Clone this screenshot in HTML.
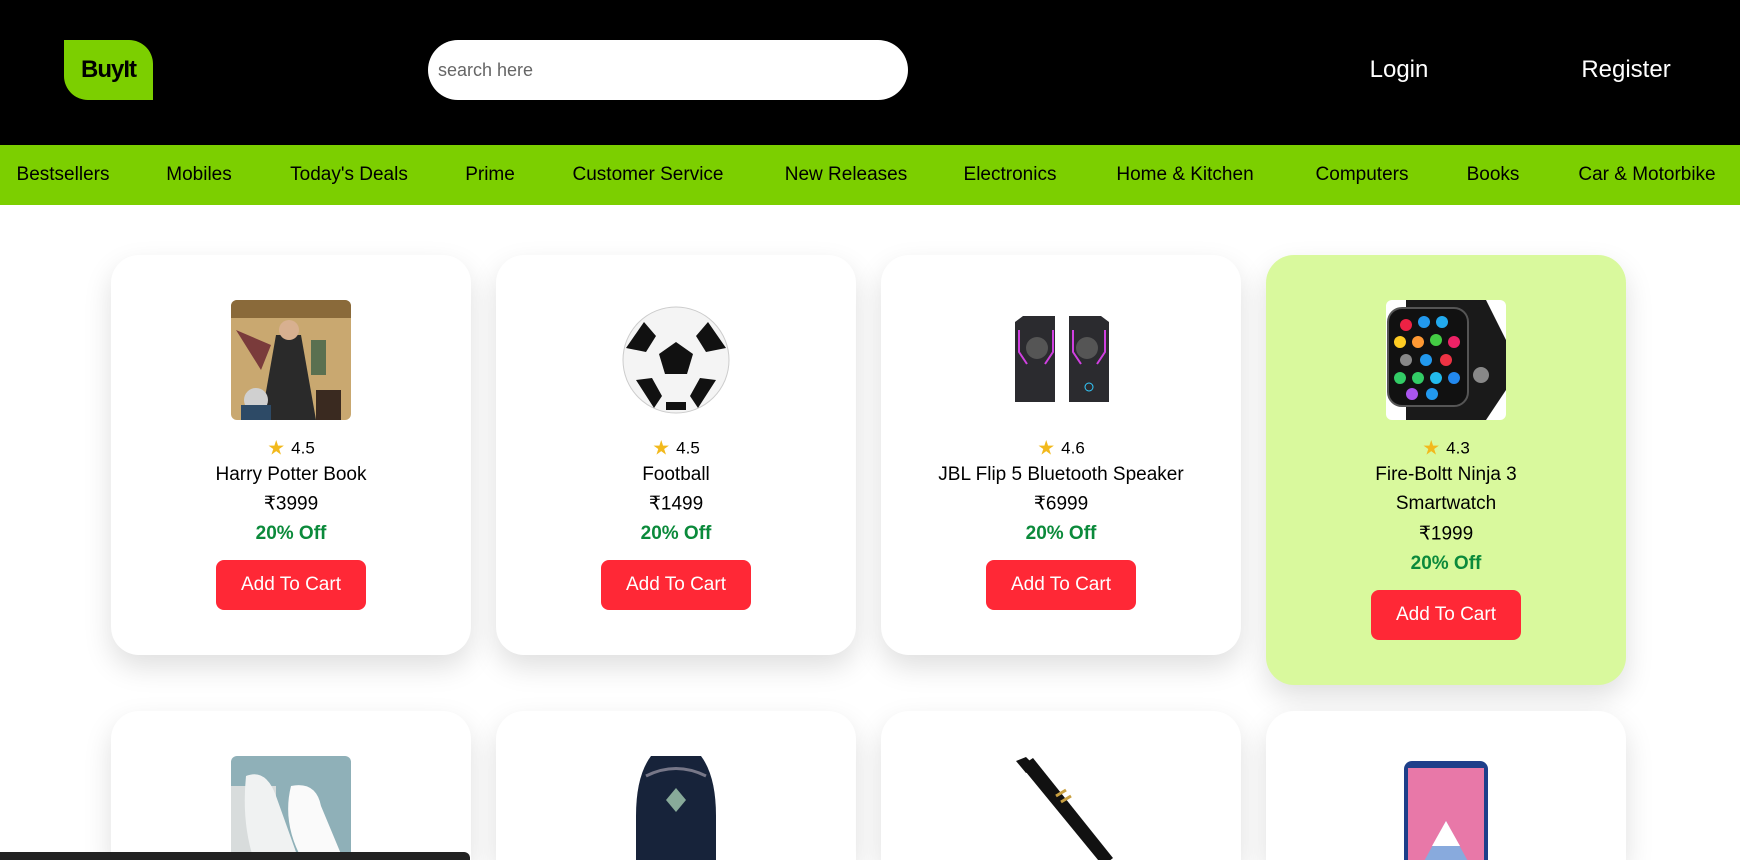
<!DOCTYPE html>
<html><head><meta charset="utf-8"><style>
*{margin:0;padding:0;box-sizing:border-box}
html,body{width:1740px;height:860px;overflow:hidden;background:#fff}
body{font-family:"Liberation Sans",sans-serif}
#w{position:relative;width:1740px;height:860px;overflow:hidden}
.hdr{position:absolute;left:0;top:0;width:1740px;height:145px;background:#000}
.logo{position:absolute;left:64px;top:40px;width:89px;height:60px;background:#7ccf00;border-radius:0 24px 0 24px;color:#000;font-weight:bold;font-size:24px;line-height:60px;text-align:center;letter-spacing:-1px}
.search{position:absolute;left:428px;top:40px;width:480px;height:60px;background:#fff;border-radius:30px;color:#666;font-size:18px;line-height:60px;padding-left:10px}
.hl{position:absolute;top:56px;color:#fff;font-size:24px;transform:translateX(-50%)}
.nav{position:absolute;left:0;top:145px;width:1740px;height:60px;background:#7ccf00}
.nav span{position:absolute;top:19px;font-size:19px;color:#000;transform:translateX(-50%);white-space:nowrap}
.card{position:absolute;width:360px;background:#fff;border-radius:28px;box-shadow:0 12px 28px rgba(0,0,0,.13);text-align:center}
.card.b{height:149px;border-radius:28px 28px 0 0;overflow:hidden;top:711px}
.card .im{position:absolute;left:120px;top:45px;width:120px;height:120px;border-radius:6px;overflow:hidden}
.card.b .im{height:104px;border-radius:6px 6px 0 0}
.t{position:absolute;left:0;width:360px;text-align:center;color:#000;transform:translateY(-50%);white-space:nowrap}
.r{font-size:17px}.n{font-size:19px}.p{font-size:19px}.o{font-size:19px;font-weight:bold;color:#0b8a3b}
.star{display:inline-block;color:#f2b91c;font-size:20px;margin-right:6px;vertical-align:-1px}
.btn{position:absolute;left:105px;width:150px;height:50px;background:#ff2836;color:#fff;border-radius:8px;font-size:19px;line-height:50px}
.bar{position:absolute;left:0;top:852px;width:470px;height:8px;background:#222;border-radius:0 6px 0 0}
</style></head><body><div id="w">
<div class="hdr">
<div class="logo">BuyIt</div>
<div class="search">search here</div>
<div class="hl" style="left:1399px">Login</div>
<div class="hl" style="left:1626px">Register</div>
</div>
<div class="nav">
<span style="left:63px">Bestsellers</span><span style="left:199px">Mobiles</span><span style="left:349px">Today's Deals</span><span style="left:490px">Prime</span><span style="left:648px">Customer Service</span><span style="left:846px">New Releases</span><span style="left:1010px">Electronics</span><span style="left:1185px">Home &amp; Kitchen</span><span style="left:1362px">Computers</span><span style="left:1493px">Books</span><span style="left:1647px">Car &amp; Motorbike</span>
</div>

<div class="card" style="left:111px;top:255px;height:400px">
<div class="im"><svg width="120" height="120"><rect width="120" height="120" fill="#c9a870"/><rect x="0" y="0" width="120" height="18" fill="#8a6a3a"/><path d="M5 30 L40 45 L30 70 Z" fill="#7a3b3b"/><path d="M45 35 h25 l15 85 h-55z" fill="#2a2a2a"/><circle cx="58" cy="30" r="10" fill="#d8b090"/><circle cx="25" cy="100" r="12" fill="#d0d0d0"/><rect x="10" y="105" width="30" height="15" fill="#2d4a66"/><path d="M80 40 h15 v35 h-15z" fill="#5a7050"/><rect x="85" y="90" width="25" height="30" fill="#3a2a20"/></svg></div>
<div class="t r" style="top:193px"><span class="star">★</span>4.5</div>
<div class="t n" style="top:220px">Harry Potter Book</div>
<div class="t p" style="top:249px">₹3999</div>
<div class="t o" style="top:279px">20% Off</div>
<div class="btn" style="top:305px">Add To Cart</div>
</div>

<div class="card" style="left:496px;top:255px;height:400px">
<div class="im"><svg width="120" height="120"><circle cx="60" cy="60" r="53" fill="#f4f4f4" stroke="#ccc"/><polygon points="60,42 77,54 71,74 49,74 43,54" fill="#111"/><path d="M28 22 l12 14 -10 16 -20 -4z M92 22 l-12 14 10 16 20 -4z M20 80 l16 -2 10 18 -8 12z M100 80 l-16 -2 -10 18 8 12z M50 110 l20 0 0 -8 -20 0z" fill="#111"/></svg></div>
<div class="t r" style="top:193px"><span class="star">★</span>4.5</div>
<div class="t n" style="top:220px">Football</div>
<div class="t p" style="top:249px">₹1499</div>
<div class="t o" style="top:279px">20% Off</div>
<div class="btn" style="top:305px">Add To Cart</div>
</div>

<div class="card" style="left:881px;top:255px;height:400px">
<div class="im"><svg width="120" height="120"><rect width="120" height="120" fill="#fff"/><path d="M14 22 l8 -6 h32 v86 h-40z" fill="#2b2b2f"/><path d="M68 16 h32 l8 6 v80 h-40z" fill="#2b2b2f"/><circle cx="36" cy="48" r="11" fill="#555"/><circle cx="86" cy="48" r="11" fill="#555"/><path d="M18 30 v22 l8 12 M52 30 v22 l-8 12 M72 30 v22 l8 12 M104 30 v22 l-8 12" stroke="#d040e0" stroke-width="2" fill="none"/><circle cx="88" cy="87" r="4" stroke="#3cf" fill="none"/></svg></div>
<div class="t r" style="top:193px"><span class="star">★</span>4.6</div>
<div class="t n" style="top:220px">JBL Flip 5 Bluetooth Speaker</div>
<div class="t p" style="top:249px">₹6999</div>
<div class="t o" style="top:279px">20% Off</div>
<div class="btn" style="top:305px">Add To Cart</div>
</div>

<div class="card" style="left:1266px;top:255px;height:430px;background:#d9f99d">
<div class="im"><svg width="120" height="120"><rect width="120" height="120" fill="#fff"/><path d="M20 0 h80 l20 40 v50 l-20 30 h-80z" fill="#1a1a1a"/><rect x="2" y="8" width="80" height="98" rx="14" fill="#111" stroke="#555" stroke-width="2"/><g><circle cx="20" cy="25" r="6" fill="#e24"/><circle cx="38" cy="22" r="6" fill="#29e"/><circle cx="56" cy="22" r="6" fill="#2ae"/><circle cx="14" cy="42" r="6" fill="#fc2"/><circle cx="32" cy="42" r="6" fill="#f93"/><circle cx="50" cy="40" r="6" fill="#4c4"/><circle cx="68" cy="42" r="6" fill="#e26"/><circle cx="20" cy="60" r="6" fill="#888"/><circle cx="40" cy="60" r="6" fill="#29e"/><circle cx="60" cy="60" r="6" fill="#e34"/><circle cx="14" cy="78" r="6" fill="#3c6"/><circle cx="32" cy="78" r="6" fill="#3c6"/><circle cx="50" cy="78" r="6" fill="#2be"/><circle cx="68" cy="78" r="6" fill="#28e"/><circle cx="26" cy="94" r="6" fill="#a5e"/><circle cx="46" cy="94" r="6" fill="#29e"/></g><circle cx="95" cy="75" r="8" fill="#888"/></svg></div>
<div class="t r" style="top:193px"><span class="star">★</span>4.3</div>
<div class="t n" style="top:220px">Fire-Boltt Ninja 3</div>
<div class="t n" style="top:249px">Smartwatch</div>
<div class="t p" style="top:279px">₹1999</div>
<div class="t o" style="top:309px">20% Off</div>
<div class="btn" style="top:335px">Add To Cart</div>
</div>

<div class="card b" style="left:111px">
<div class="im"><svg width="120" height="120"><rect width="120" height="120" fill="#8fb0b8"/><rect x="0" y="30" width="45" height="90" fill="#d8dcdc"/><path d="M15 20 q20 -8 30 20 l25 70 h-45 q-15 -40 -10 -90z" fill="#f0f2f2"/><path d="M60 30 q25 -5 30 20 l25 60 h-40 q-25 -40 -15 -80z" fill="#fafafa"/></svg></div>
</div>
<div class="card b" style="left:496px">
<div class="im"><svg width="120" height="120"><rect width="120" height="120" fill="#fff"/><path d="M35 0 h50 q15 20 15 60 v60 h-80 v-60 q0 -40 15 -60z" fill="#17233a"/><path d="M60 32 l10 12 -10 12 -10 -12z" fill="#8a9"/><path d="M30 20 q30 -15 60 0" stroke="#778" stroke-width="3" fill="none"/></svg></div>
</div>
<div class="card b" style="left:881px">
<div class="im"><svg width="120" height="120"><rect width="120" height="120" fill="#fff"/><path d="M20 10 l12 -8 80 100 -10 8z" fill="#111"/><path d="M55 40 l10 -6 M60 46 l10 -6" stroke="#c9a040" stroke-width="3"/><path d="M15 5 l10 -4 10 10 -10 6z" fill="#111"/></svg></div>
</div>
<div class="card b" style="left:1266px">
<div class="im"><svg width="120" height="120"><rect width="120" height="120" fill="#fff"/><rect x="18" y="5" width="84" height="115" rx="8" fill="#1e3f8a"/><rect x="22" y="12" width="76" height="108" fill="#e878a8"/><path d="M30 120 l30 -55 30 55z" fill="#8ad"/><path d="M60 65 l14 25 h-28z" fill="#fff"/></svg></div>
</div>
<div class="bar"></div>
</div></body></html>
